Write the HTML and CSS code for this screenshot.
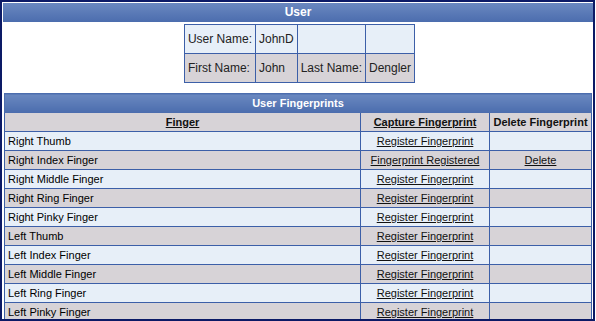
FILE: index.html
```html
<!DOCTYPE html>
<html>
<head>
<meta charset="utf-8">
<link rel="stylesheet" href="styles.css">
</head>
<body>
<div class="frame">
  <div class="bar">User</div>
  <div class="userwrap">
    <table class="user">
      <tr class="odd">
        <td>User Name:</td><td>JohnD</td><td></td><td></td>
      </tr>
      <tr class="even">
        <td>First Name:</td><td>John</td><td>Last Name:</td><td>Dengler</td>
      </tr>
    </table>
  </div>
  <table class="fp">
    <tr class="titlebar"><th colspan="3">User Fingerprints</th></tr>
    <tr class="colhead">
      <th class="c1"><a>Finger</a></th>
      <th class="c2"><a>Capture Fingerprint</a></th>
      <th class="c3">Delete Fingerprint</th>
    </tr>
    <tr class="odd"><td>Right Thumb</td><td class="ctr"><a>Register Fingerprint</a></td><td></td></tr>
    <tr class="even"><td>Right Index Finger</td><td class="ctr"><a>Fingerprint Registered</a></td><td class="ctr"><a>Delete</a></td></tr>
    <tr class="odd"><td>Right Middle Finger</td><td class="ctr"><a>Register Fingerprint</a></td><td></td></tr>
    <tr class="even"><td>Right Ring Finger</td><td class="ctr"><a>Register Fingerprint</a></td><td></td></tr>
    <tr class="odd"><td>Right Pinky Finger</td><td class="ctr"><a>Register Fingerprint</a></td><td></td></tr>
    <tr class="even"><td>Left Thumb</td><td class="ctr"><a>Register Fingerprint</a></td><td></td></tr>
    <tr class="odd"><td>Left Index Finger</td><td class="ctr"><a>Register Fingerprint</a></td><td></td></tr>
    <tr class="even"><td>Left Middle Finger</td><td class="ctr"><a>Register Fingerprint</a></td><td></td></tr>
    <tr class="odd"><td>Left Ring Finger</td><td class="ctr"><a>Register Fingerprint</a></td><td></td></tr>
    <tr class="even"><td>Left Pinky Finger</td><td class="ctr"><a>Register Fingerprint</a></td><td></td></tr>
  </table>
</div>
</body>
</html>
```
FILE: styles.css
```css
html, body {
  margin: 0;
  padding: 0;
  background: #ffffff;
}
body {
  font-family: "Liberation Sans", Arial, sans-serif;
  font-size: 11px;
  color: #000;
}
.frame {
  box-sizing: border-box;
  width: 595px;
  height: 321px;
  border: 2px solid #0c1a66;
  padding: 1px 0 0 1px;
  overflow: hidden;
}
.bar {
  height: 19px;
  line-height: 19px;
  background: linear-gradient(#6a88c0, #4c6dae);
  color: #fff;
  font-weight: bold;
  font-size: 12px;
  text-align: center;
}
.userwrap {
  display: flex;
  justify-content: center;
  padding: 2px 0 10px 3px;
}
table {
  border-collapse: collapse;
}
.user td {
  border: 1px solid #3c5fa8;
  height: 28px;
  padding: 0 3px;
  font-size: 12px;
  color: #222;
  white-space: nowrap;
}
.odd td { background: #e7eff8; }
.even td { background: #d7d3d7; }
.fp {
  width: 588px;
  margin-left: 1px;
}
.fp td, .fp th {
  border: 1px solid #3c5fa8;
  height: 18px;
  padding: 0 3px;
  white-space: nowrap;
}
.fp .titlebar th {
  background: linear-gradient(#6a88c0, #4c6dae);
  color: #fff;
  font-weight: bold;
  height: 18px;
  border-color: #4c6dae;
}
.fp .colhead th {
  background: #d7d3d7;
  font-weight: bold;
  color: #111;
}
.fp .c2 { width: 122px; }
.fp .c3 { width: 95px; }
.ctr { text-align: center; }
a {
  text-decoration: underline;
  color: #111;
}
```
